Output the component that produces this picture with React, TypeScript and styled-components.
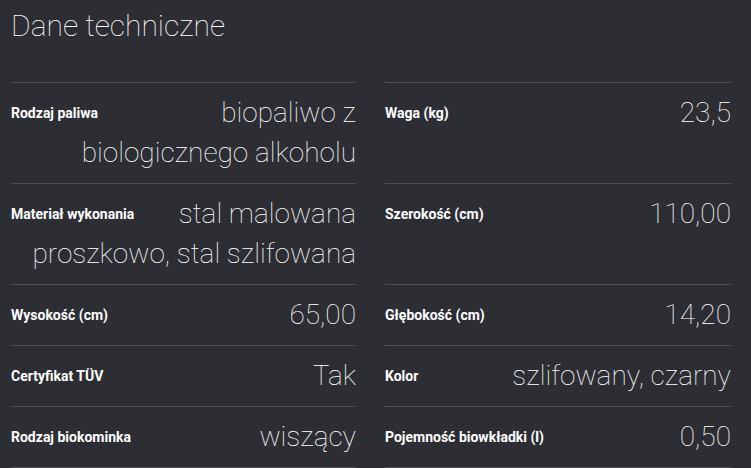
import React from 'react'
import styled, { createGlobalStyle } from 'styled-components';

const GlobalStyle = createGlobalStyle`
  html, body {
    margin: 0;
    padding: 0;
    background: #2d2e33;
  }
  body {
    font-family: Roboto, "Open Sans", Arial, sans-serif;
  }
`;

interface Spec {
    label: string;
    value: string;
}

const specs: Spec[] = [
    { label: 'Rodzaj paliwa', value: 'biopaliwo z biologicznego alkoholu' },
    { label: 'Waga (kg)', value: '23,5' },
    { label: 'Materiał wykonania', value: 'stal malowana proszkowo, stal szlifowana' },
    { label: 'Szerokość (cm)', value: '110,00' },
    { label: 'Wysokość (cm)', value: '65,00' },
    { label: 'Głębokość (cm)', value: '14,20' },
    { label: 'Certyfikat TÜV', value: 'Tak' },
    { label: 'Kolor', value: 'szlifowany, czarny' },
    { label: 'Rodzaj biokominka', value: 'wiszący' },
    { label: 'Pojemność biowkładki (l)', value: '0,50' },
];

const Page = styled.div`
    width: 751px;
    height: 468px;
    overflow: hidden;
    padding: 0 20px 0 11px;
    box-sizing: border-box;
    background: #2d2e33;
`;

const Title = styled.h2`
    margin: 0;
    padding-top: 7px;
    height: 82px;
    box-sizing: border-box;
    font-weight: 100;
    font-size: 30px;
    line-height: 38px;
    color: #ffffff;
`;

const Grid = styled.div`
    display: grid;
    grid-template-columns: 345px 346px;
    column-gap: 29px;
`;

const Row = styled.div`
    border-top: 1px solid #4d4e56;
    padding: 10px 0;
    &::after {
        content: '';
        display: block;
        clear: both;
    }
`;

const Label = styled.span`
    float: left;
    line-height: 40px;
    font-size: 14px;
    font-weight: 700;
    color: #ffffff;
    margin-right: 16px;
`;

const Value = styled.div`
    text-align: right;
    font-size: 28px;
    font-weight: 100;
    line-height: 40px;
    color: #ffffff;
`;

export default function App() {
    return (
        <Page>
            <GlobalStyle />
            <Title>Dane techniczne</Title>
            <Grid>
                {specs.map((s) => (
                    <Row key={s.label}>
                        <Label>{s.label}</Label>
                        <Value>{s.value}</Value>
                    </Row>
                ))}
                <Row />
                <Row />
            </Grid>
        </Page>
    );
}
